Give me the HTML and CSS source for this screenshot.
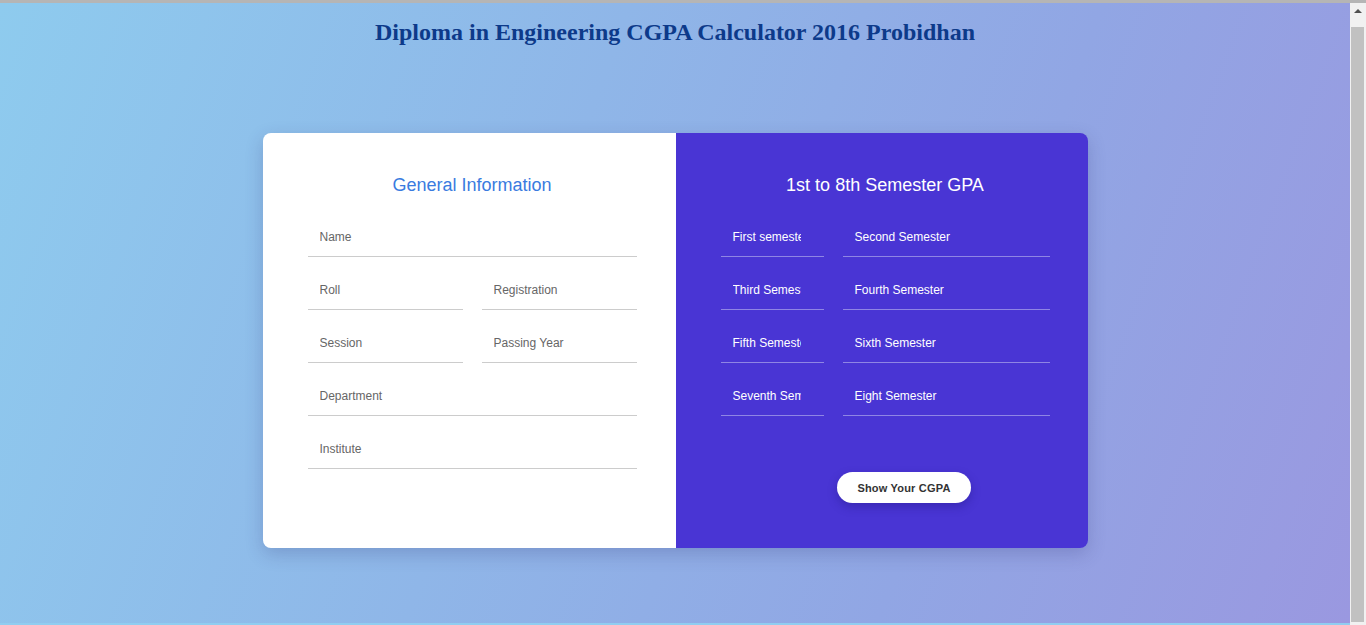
FILE: index.html
```html
<!DOCTYPE html>
<html lang="en">
<head>
<meta charset="utf-8">
<title>CGPA Calculator</title>
<link rel="stylesheet" href="styles.css">
</head>
<body>
<div class="chrome-bar"></div>
<div class="window">
  <main class="viewport">
    <h2 class="page-title">Diploma in Engineering CGPA Calculator 2016 Probidhan</h2>
    <div class="card">
      <section class="panel panel-info">
        <div class="fields">
          <h3 class="panel-title">General Information</h3>
          <input class="field full" type="text" placeholder="Name">
          <div class="pair">
            <input class="field" type="text" placeholder="Roll">
            <input class="field" type="text" placeholder="Registration">
          </div>
          <div class="pair">
            <input class="field" type="text" placeholder="Session">
            <input class="field" type="text" placeholder="Passing Year">
          </div>
          <input class="field full" type="text" placeholder="Department">
          <input class="field full" type="text" placeholder="Institute">
        </div>
      </section>
      <section class="panel panel-gpa">
        <div class="fields">
          <h3 class="panel-title">1st to 8th Semester GPA</h3>
          <div class="pair gpa-pair">
            <input class="field" type="text" placeholder="First semester">
            <input class="field" type="text" placeholder="Second Semester">
          </div>
          <div class="pair gpa-pair">
            <input class="field" type="text" placeholder="Third Semester">
            <input class="field" type="text" placeholder="Fourth Semester">
          </div>
          <div class="pair gpa-pair">
            <input class="field" type="text" placeholder="Fifth Semester">
            <input class="field" type="text" placeholder="Sixth Semester">
          </div>
          <div class="pair gpa-pair">
            <input class="field" type="text" placeholder="Seventh Semester">
            <input class="field" type="text" placeholder="Eight Semester">
          </div>
        </div>
        <div class="actions">
          <button class="btn" type="button">Show Your CGPA</button>
        </div>
      </section>
    </div>
  </main>
  <div class="scrollbar" aria-hidden="true">
    <div class="scroll-arrow">
      <svg width="16" height="17" viewBox="0 0 16 17"><path d="M4 10 L8 6 L12 10 Z" fill="#505050"/></svg>
    </div>
    <div class="scroll-thumb"></div>
  </div>
</div>
</body>
</html>
```

FILE: styles.css
```css
* { box-sizing: border-box; }

html, body {
  margin: 0;
  padding: 0;
  height: 100%;
  overflow: hidden;
}

body {
  display: flex;
  flex-direction: column;
  font-family: "Liberation Sans", Arial, sans-serif;
}

.chrome-bar {
  height: 3px;
  flex: none;
  background: #b5b5b5;
}

.window {
  flex: 1;
  display: flex;
  min-height: 0;
}

.viewport {
  flex: 1;
  overflow: hidden;
  background: linear-gradient(110deg, #8ecbee 0%, #8fb6e8 40%, #91a6e4 70%, #9a98e0 100%);
  border-bottom: 2px solid #90cdf0;
}

.scrollbar {
  flex: 0 0 16px;
  display: flex;
  flex-direction: column;
  background: #f1f1f1;
  padding-bottom: 3px;
}

.scroll-arrow {
  height: 24px;
  flex: none;
}

.scroll-arrow svg { display: block; }

.scroll-thumb {
  flex: 1;
  margin: 0 2px 0 1px;
  background: #c1c1c1;
}

.page-title {
  margin: 16px 0 87px;
  text-align: center;
  font-family: "Liberation Serif", "Times New Roman", serif;
  font-weight: bold;
  font-size: 24px;
  color: #0d3a8a;
}

.card {
  width: 825px;
  height: 415px;
  margin: 0 auto;
  display: flex;
  border-radius: 8px;
  overflow: hidden;
  box-shadow: 0 6px 18px rgba(40, 40, 110, 0.22);
}

.panel {
  flex: 0 0 413px;
  padding: 41px 0 0 45px;
}

.panel-gpa {
  flex: 1;
  background: #4935d4;
}

.panel-info {
  background: #ffffff;
}

.fields {
  width: 329px;
  display: flex;
  flex-direction: column;
  gap: 14px;
}

.panel-title {
  margin: 0 0 8px;
  text-align: center;
  font-weight: normal;
  font-size: 18px;
  line-height: 22px;
}

.panel-info .panel-title { color: #3a7be0; }
.panel-gpa .panel-title { color: #ffffff; }

.field {
  display: block;
  width: 100%;
  height: 39px;
  padding: 0 23px 0 12px;
  border: 0;
  border-bottom: 1px solid #cccccc;
  background: transparent;
  font-family: "Liberation Sans", Arial, sans-serif;
  font-size: 12px;
  outline: none;
  color: #333;
}

.field::placeholder { color: #666666; }

.pair {
  display: grid;
  grid-template-columns: 155px 155px;
  column-gap: 19px;
}

.gpa-pair {
  grid-template-columns: 103px 207px;
}

.panel-gpa .field {
  border-bottom-color: #8f85e4;
  color: #fff;
}

.panel-gpa .field::placeholder { color: #ffffff; }

.actions {
  display: flex;
  justify-content: center;
  margin-top: 56px;
}

.btn {
  width: 134px;
  height: 31px;
  border: 0;
  border-radius: 16px;
  background: #ffffff;
  color: #333333;
  font-family: "Liberation Sans", Arial, sans-serif;
  font-weight: bold;
  font-size: 11px;
  letter-spacing: 0.2px;
  box-shadow: 0 4px 10px rgba(30, 20, 120, 0.35);
  cursor: pointer;
}
```
